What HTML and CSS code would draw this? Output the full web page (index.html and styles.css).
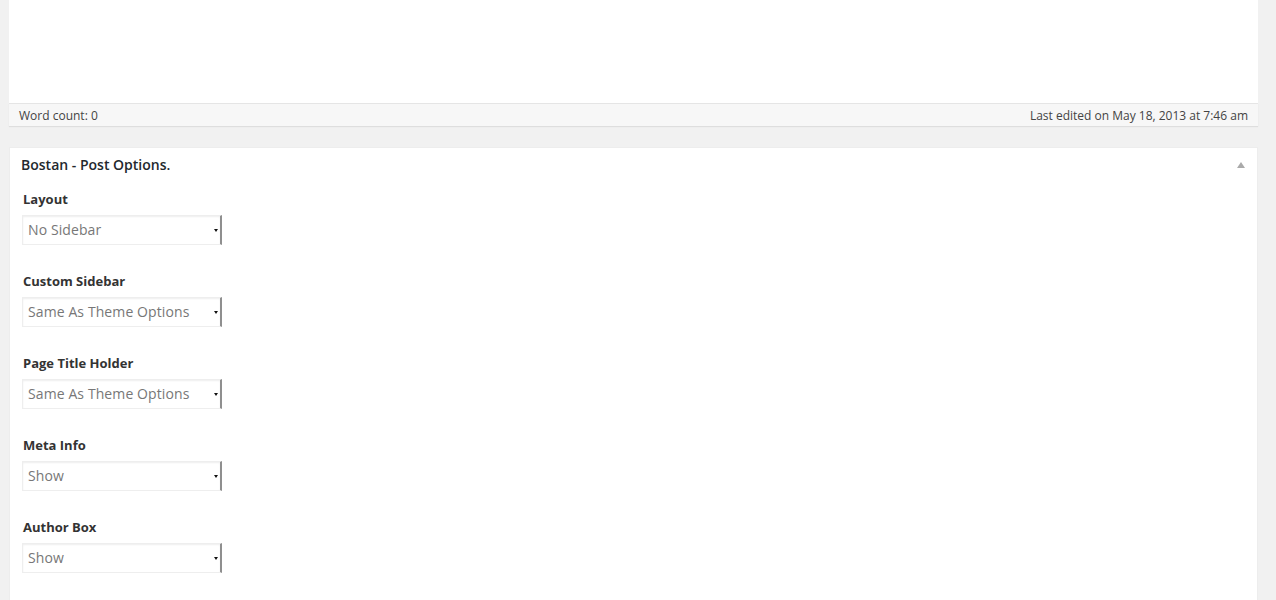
FILE: index.html
```html
<!DOCTYPE html>
<html lang="en">
<head>
  <meta charset="UTF-8">
  <meta name="viewport" content="width=device-width, initial-scale=1.0">
  <title>Edit Post</title>
  <link rel="stylesheet" href="styles.css">
</head>
<body>

  <div class="wrap">
    <div class="editor-area"></div>
    <div class="status-bar">
      <span>Word count: 0</span>
      <span>Last edited on May 18, 2013 at 7:46 am</span>
    </div>

    <div class="postbox">
      <div class="postbox-head">
        <h3>Bostan - Post Options.</h3>
        <span class="toggle-arrow"></span>
      </div>
      <div class="postbox-body">
        <div class="field">
          <label>Layout</label>
          <div class="fake-select"><span>No Sidebar</span><i class="sel-arrow"></i></div>
        </div>
        <div class="field">
          <label>Custom Sidebar</label>
          <div class="fake-select"><span>Same As Theme Options</span><i class="sel-arrow"></i></div>
        </div>
        <div class="field">
          <label>Page Title Holder</label>
          <div class="fake-select"><span>Same As Theme Options</span><i class="sel-arrow"></i></div>
        </div>
        <div class="field">
          <label>Meta Info</label>
          <div class="fake-select"><span>Show</span><i class="sel-arrow"></i></div>
        </div>
        <div class="field">
          <label>Author Box</label>
          <div class="fake-select"><span>Show</span><i class="sel-arrow"></i></div>
        </div>
      </div>
    </div>
  </div>

</body>
</html>
```

FILE: styles.css
```css
body {
  margin: 0;
  background-color: #f1f1f1;
  font-family: "Open Sans", "Noto Sans", sans-serif;
  color: #444444;
}

.wrap {
  padding: 0 18px 0 9px;
}

.editor-area {
  height: 103px;
  background-color: #ffffff;
}

.status-bar {
  display: flex;
  justify-content: space-between;
  height: 22px;
  padding: 0 10px 0 10px;
  background-color: #f7f7f7;
  border-top: 1px solid #e5e5e5;
  box-shadow: 0 1px 1px rgba(0,0,0,0.08);
  font-size: 12px;
  line-height: 24px;
  color: #444444;
}

.postbox {
  margin-top: 21px;
  background-color: #ffffff;
  border: 1px solid #ededed;
  border-bottom: none;
  height: 460px;
}

.postbox-head {
  display: flex;
  justify-content: space-between;
  align-items: center;
  padding: 7px 12px 7px 11px;
}

.postbox-head h3 {
  margin: 0;
  font-size: 14px;
  line-height: 20px;
  font-weight: 600;
  color: #23282d;
}

.toggle-arrow {
  width: 0;
  height: 0;
  border-left: 4px solid transparent;
  border-right: 4px solid transparent;
  border-bottom: 6px solid #aaaaaa;
}

.postbox-body {
  padding: 8px 13px 0 12px;
  display: flex;
  flex-direction: column;
  gap: 27px;
}

.field label {
  display: block;
  font-size: 13px;
  line-height: 18px;
  font-weight: 700;
  color: #333333;
  margin: 0 0 7px 1px;
}

.fake-select {
  display: flex;
  justify-content: space-between;
  align-items: center;
  box-sizing: border-box;
  width: 200px;
  height: 30px;
  padding: 0 0 2px 5px;
  border: 1px solid #eeeeee;
  border-right: 2px solid #8f8f8f;
  box-shadow: inset 0 1px 2px rgba(0,0,0,0.07);
  font-size: 14px;
  letter-spacing: 0.1px;
  color: #777777;
  background-color: #ffffff;
}

.sel-arrow {
  width: 0;
  height: 0;
  border-left: 2px solid transparent;
  border-right: 2px solid transparent;
  border-top: 3px solid #111111;
  margin: 2px 2px 0 0;
}
```
